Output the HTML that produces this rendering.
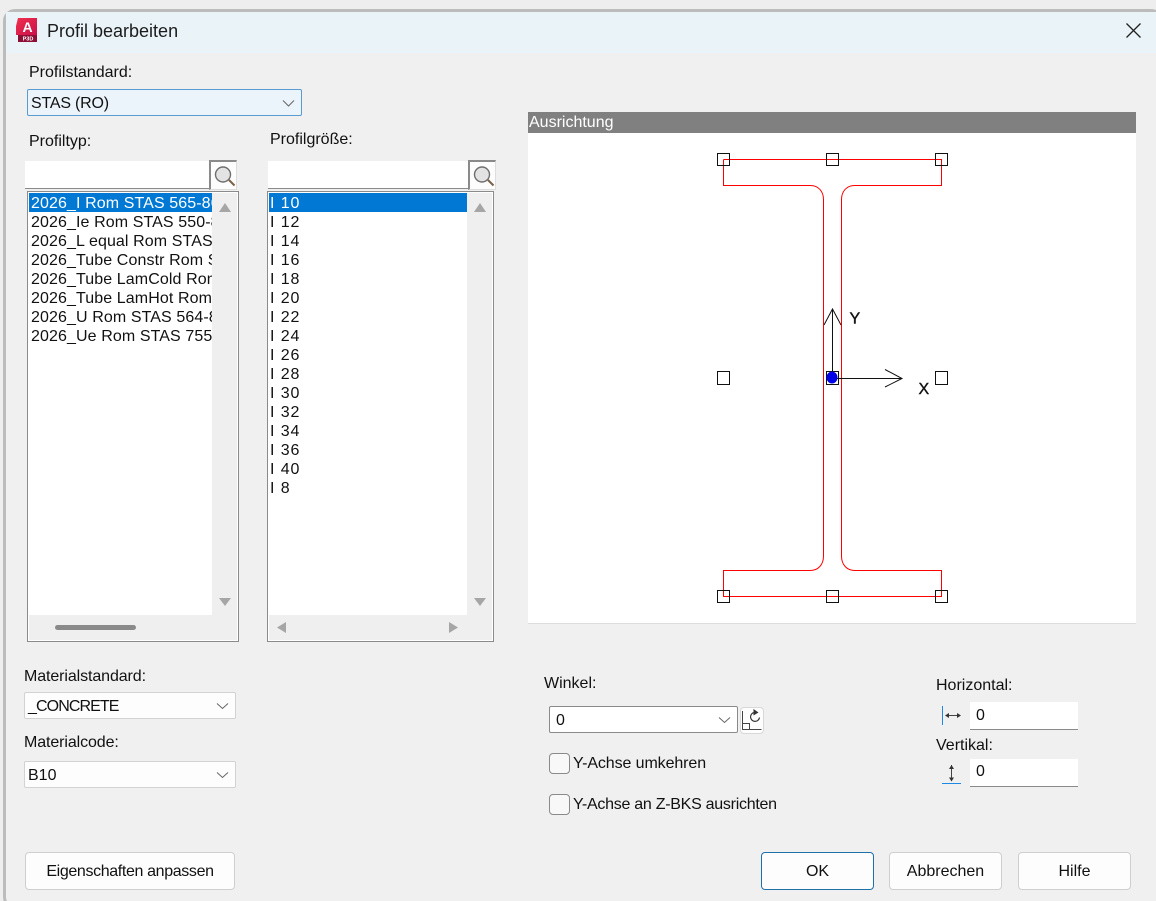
<!DOCTYPE html>
<html><head><meta charset="utf-8">
<style>
html,body{margin:0;padding:0;width:1156px;height:901px;overflow:hidden;background:#eeeeee}
body{position:relative;font-family:"Liberation Sans",sans-serif;font-size:16px;color:#111}
.a{position:absolute;box-sizing:border-box}
.t{position:absolute;white-space:nowrap;line-height:20px;height:20px;margin-top:1px}
.win{left:3px;top:9px;width:1160px;height:900px;border:3px solid #bcbcbc;border-radius:12px;background:#f0f0f0;overflow:hidden}
.title{left:6px;top:12px;width:1150px;height:41px;background:#eaf4f8}
.combo{background:#fdfdfd;border:1px solid #d2d2d2;border-radius:2px}
.btn{background:#fdfdfd;border:1px solid #cfcfcf;border-radius:4px;text-align:center;line-height:38px;height:38px}
.list{border:1px solid #8b8b8b;background:#efefef;box-shadow:inset 0 0 0 1px #fff}
.row{position:absolute;left:0;height:19px;line-height:21px;white-space:nowrap;padding-left:2px;overflow:hidden;letter-spacing:.1px}
.l2 .row{letter-spacing:.9px;padding-left:1px}
.sel{background:#0078d4;color:#fff}
.w{background:#fff;overflow:hidden}
.inp{background:#fff;border-bottom:2px solid #8a8a8a}
.cb{width:21px;height:21px;border:1px solid #8a8a8a;border-radius:4px;background:#f8f8f8}
svg{position:absolute;overflow:visible}
</style></head><body>
<div class="a win"></div>
<div class="a title"></div>

<svg style="left:0;top:0" width="1156" height="60">
<defs><linearGradient id="g" x1="0" y1="0" x2="1" y2="1"><stop offset="0" stop-color="#f0304f"/><stop offset="1" stop-color="#c9104a"/></linearGradient></defs>
<path d="M18 18H37V42H18Z" fill="#8e0f36"/>
<path d="M16 26L18 18H37V35H16Z" fill="url(#g)"/>
<text x="27.5" y="32" font-family="Liberation Sans" font-weight="700" font-size="14" fill="#fff" text-anchor="middle">A</text>
<text x="28" y="40.5" font-family="Liberation Sans" font-weight="700" font-size="5.5" fill="#fff" text-anchor="middle">P3D</text>
<path d="M1126.5 23.5L1140.5 37.5M1140.5 23.5L1126.5 37.5" stroke="#222" stroke-width="1.3" fill="none"/>
</svg>
<div class="t" style="left:47px;top:20px;font-size:18px;color:#1c1c1c">Profil bearbeiten</div>

<div class="t" style="left:29px;top:62px">Profilstandard:</div>
<div class="a" style="left:27px;top:89px;width:275px;height:27px;background:#ebf3fb;border:1px solid #5a9bd0;border-radius:2px"></div>
<div class="t" style="left:31px;top:93px;letter-spacing:-.2px">STAS (RO)</div>
<svg style="left:0;top:0" width="1156" height="901">
<path d="M283 100.500L288.500 106L294 100.500" stroke="#666" fill="none"/>
</svg>

<div class="t" style="left:29px;top:131px">Profiltyp:</div>
<div class="t" style="left:270px;top:129px">Profilgröße:</div>

<!-- search 1 -->
<div class="a inp" style="left:25px;top:161px;width:185px;height:28px;border-bottom-width:1px"></div>
<div class="a" style="left:209px;top:160px;width:28px;height:30px;background:#fdfdfd;border-top:2px solid #8a8a8a;border-left:2px solid #8a8a8a;border-right:1px solid #ddd;border-bottom:1px solid #ddd"></div>
<svg style="left:210px;top:161px" width="28" height="28"><circle cx="13" cy="13.5" r="7.5" fill="#e3e3e3" stroke="#6f6f6f" stroke-width="1.4"/><path d="M19 19L24.5 24.5" stroke="#7b6248" stroke-width="2"/></svg>
<!-- search 2 -->
<div class="a inp" style="left:268px;top:161px;width:200px;height:28px;border-bottom-width:1px"></div>
<div class="a" style="left:468px;top:160px;width:28px;height:30px;background:#fdfdfd;border-top:2px solid #8a8a8a;border-left:2px solid #8a8a8a;border-right:1px solid #ddd;border-bottom:1px solid #ddd"></div>
<svg style="left:469px;top:161px" width="28" height="28"><circle cx="13" cy="13.5" r="7.5" fill="#e3e3e3" stroke="#6f6f6f" stroke-width="1.4"/><path d="M19 19L24.5 24.5" stroke="#7b6248" stroke-width="2"/></svg>

<!-- list 1 -->
<div class="a list" style="left:27px;top:191px;width:212px;height:451px"></div>
<div class="a w" style="left:29px;top:193px;width:183px;height:422px">
<div class="row sel" style="top:0;width:182px">2026_I Rom STAS 565-86</div>
<div class="row" style="top:19px;width:183px">2026_Ie Rom STAS 550-86</div>
<div class="row" style="top:38px;width:183px">2026_L equal Rom STAS 424</div>
<div class="row" style="top:57px;width:183px">2026_Tube Constr Rom STAS</div>
<div class="row" style="top:76px;width:183px">2026_Tube LamCold Rom STAS</div>
<div class="row" style="top:95px;width:183px">2026_Tube LamHot Rom STAS</div>
<div class="row" style="top:114px;width:183px">2026_U Rom STAS 564-86</div>
<div class="row" style="top:133px;width:183px">2026_Ue Rom STAS 755-86</div>
</div>
<!-- list 2 -->
<div class="a list" style="left:267px;top:191px;width:227px;height:451px"></div>
<div class="a w l2" style="left:269px;top:193px;width:198px;height:422px">
<div class="row sel" style="top:0;width:197px">I 10</div>
<div class="row" style="top:19px">I 12</div>
<div class="row" style="top:38px">I 14</div>
<div class="row" style="top:57px">I 16</div>
<div class="row" style="top:76px">I 18</div>
<div class="row" style="top:95px">I 20</div>
<div class="row" style="top:114px">I 22</div>
<div class="row" style="top:133px">I 24</div>
<div class="row" style="top:152px">I 26</div>
<div class="row" style="top:171px">I 28</div>
<div class="row" style="top:190px">I 30</div>
<div class="row" style="top:209px">I 32</div>
<div class="row" style="top:228px">I 34</div>
<div class="row" style="top:247px">I 36</div>
<div class="row" style="top:266px">I 40</div>
<div class="row" style="top:285px">I 8</div>
</div>
<svg style="left:0;top:0" width="1156" height="901">
<g fill="#a6a6a6">
<path d="M219 212L225 203L231 212Z"/><path d="M219 598L231 598L225 606Z"/>
<path d="M474 212L480 203L486 212Z"/><path d="M474 598L486 598L480 606Z"/>
<path d="M286 622V633L277 627.5Z"/><path d="M449 622V633L458 627.5Z"/>
</g>
<rect x="55" y="625" width="81" height="5" rx="2.5" fill="#8a8a8a"/>
</svg>

<!-- Ausrichtung -->
<div class="a" style="left:528px;top:112px;width:608px;height:21px;background:#808080"></div>
<div class="t" style="left:529px;top:112px;color:#fff">Ausrichtung</div>
<div class="a" style="left:528px;top:133px;width:608px;height:491px;background:#fff;border-bottom:1px solid #dcdcdc"></div>
<svg style="left:0;top:0" width="1156" height="901">
<g shape-rendering="crispEdges" fill="none">
<path d="M723.5 159.5H941.5V185.5H854.5M810.5 185.5H723.5V159.5M823.5 199.5V556M841.5 199.5V556M810.5 570.5H723.5V596.5H941.5V570.5H855" stroke="#f00"/>
</g>
<g fill="none" stroke="#f00">
<path d="M810.5 185.500C818 185.500 823.500 191 823.500 199.500"/>
<path d="M854.500 185.500C847 185.500 841.500 191 841.500 199.500"/>
<path d="M823.500 556C823.500 565 818 570.500 810 570.500"/>
<path d="M841.500 556C841.500 565 847 570.500 855 570.500"/>
</g>
<g fill="none" stroke="#111" shape-rendering="crispEdges">
<rect x="717.5" y="153.5" width="12" height="12"/><rect x="826.5" y="153.5" width="12" height="12"/><rect x="935.5" y="153.5" width="12" height="12"/>
<rect x="717.5" y="371.5" width="12" height="13"/><rect x="826.5" y="371.5" width="12" height="13"/><rect x="935.5" y="371.5" width="12" height="13"/>
<rect x="717.5" y="590.5" width="12" height="12"/><rect x="826.5" y="590.5" width="12" height="12"/><rect x="935.5" y="590.5" width="12" height="12"/>
<path d="M832.5 309V378M832 378.5H902"/>
</g>
<g fill="none" stroke="#111">
<path d="M824 325L832.500 309L841 325M885 369.500L902 378.500L885 387"/>
</g>
<ellipse cx="832" cy="377.500" rx="5.500" ry="6" fill="#0000e6"/>
<text x="849.500" y="323.500" font-family="Liberation Sans" font-size="16" fill="#111" stroke="#111" stroke-width=".4">Y</text>
<text x="918.500" y="394" font-family="Liberation Sans" font-size="16" fill="#111" stroke="#111" stroke-width=".4">X</text>
</svg>

<!-- Material -->
<div class="t" style="left:24px;top:666px;letter-spacing:-.1px">Materialstandard:</div>
<div class="a combo" style="left:24px;top:692px;width:212px;height:27px"></div>
<div class="t" style="left:28px;top:696px;letter-spacing:-.9px">_CONCRETE</div>
<div class="t" style="left:24px;top:732px;letter-spacing:-.1px">Materialcode:</div>
<div class="a combo" style="left:24px;top:761px;width:212px;height:27px"></div>
<div class="t" style="left:28px;top:765px">B10</div>
<svg style="left:0;top:0" width="1156" height="901">
<path d="M217 703.500L222.500 708.500L228 703.500M217 772.500L222.500 777.500L228 772.500" stroke="#666" fill="none"/>
</svg>

<!-- Winkel -->
<div class="t" style="left:544px;top:673px">Winkel:</div>
<div class="a" style="left:549px;top:706px;width:189px;height:27px;background:#fff;border:1px solid #8a8a8a;border-radius:2px"></div>
<div class="t" style="left:556px;top:710px">0</div>
<div class="a" style="left:740px;top:707px;width:24px;height:27px;background:#fdfdfd;border:1px solid #d8d8d8;border-radius:4px"></div>
<svg style="left:0;top:0" width="1156" height="901">
<path d="M719 717.500L724.500 722.500L730 717.500" stroke="#666" fill="none"/>
<path d="M742.500 711V729.500H761.500M742.500 723.500H749.500V729.500" stroke="#444" fill="none" shape-rendering="crispEdges"/>
<path d="M759.500 717.500A4.500 4.500 0 1 1 754 712.500" stroke="#333" stroke-width="1.200" fill="none"/>
<path d="M753.500 709L758.500 712.500L753.500 715.500Z" fill="#333"/>
</svg>
<div class="a cb" style="left:549px;top:753px"></div>
<div class="t" style="left:573px;top:753px;letter-spacing:-.1px">Y-Achse umkehren</div>
<div class="a cb" style="left:549px;top:794px"></div>
<div class="t" style="left:573px;top:794px;letter-spacing:-.27px">Y-Achse an Z-BKS ausrichten</div>

<!-- Horizontal / Vertikal -->
<div class="t" style="left:936px;top:675px">Horizontal:</div>
<div class="a inp" style="left:970px;top:702px;width:108px;height:28px;border-bottom-width:1px"></div>
<div class="t" style="left:976px;top:705px">0</div>
<div class="t" style="left:936px;top:735px">Vertikal:</div>
<div class="a inp" style="left:970px;top:759px;width:108px;height:28px;border-bottom-width:1px"></div>
<div class="t" style="left:976px;top:761px">0</div>
<svg style="left:0;top:0" width="1156" height="901">
<path d="M942.500 706V725" stroke="#1e88e5" fill="none"/>
<path d="M942 783.500H961" stroke="#1e88e5" fill="none"/>
<path d="M946 715.500H960M951.500 765V781" stroke="#444" fill="none"/>
<path d="M945 715.500L949 713V718ZM961 715.500L957 713V718ZM951.500 765L949 769H954ZM951.500 781.500L949 777.500H954Z" fill="#333"/>
</svg>

<!-- Buttons -->
<div class="a btn" style="left:25px;top:852px;width:210px;letter-spacing:-.36px">Eigenschaften anpassen</div>
<div class="a btn" style="left:761px;top:852px;width:113px;border-color:#1f6fa8">OK</div>
<div class="a btn" style="left:889px;top:852px;width:113px">Abbrechen</div>
<div class="a btn" style="left:1018px;top:852px;width:113px">Hilfe</div>
</body></html>
